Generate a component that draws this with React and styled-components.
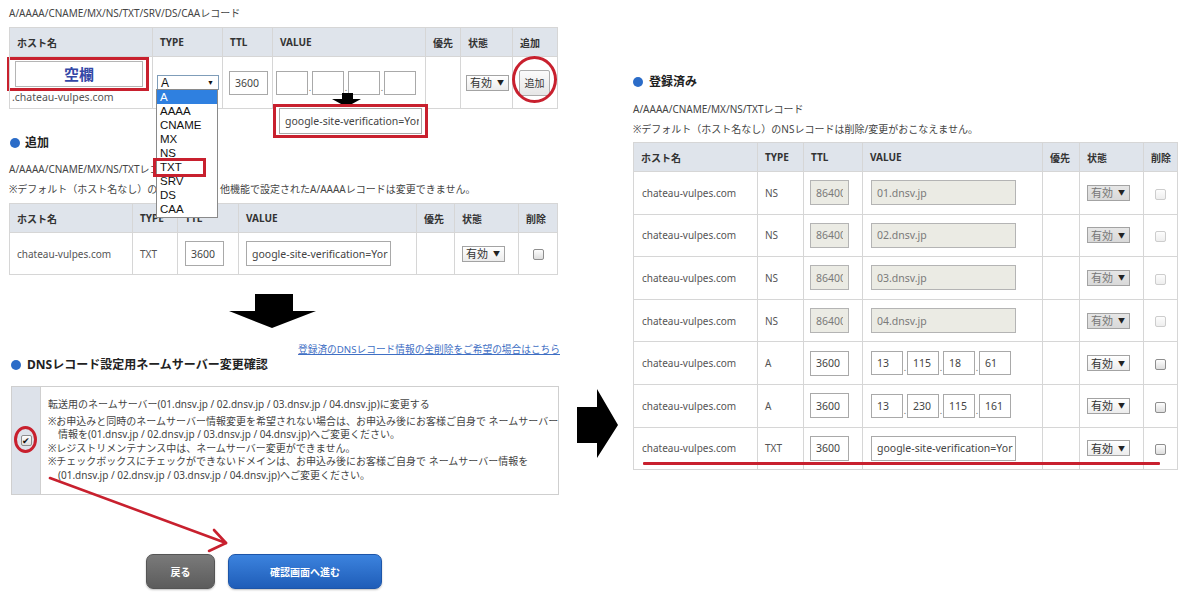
import React from "react";
import styled, { createGlobalStyle } from "styled-components";

const FONT = `"Noto Sans", "Noto Sans CJK JP", sans-serif`;
const RED = "#c8202e";

const GlobalStyle = createGlobalStyle`
  html, body { margin: 0; padding: 0; background: #fff; }
  body { font-family: ${FONT}; color: #444; }
  * { box-sizing: border-box; }
`;

const Page = styled.div`
  display: flex;
  width: 1200px;
  height: 606px;
  overflow: hidden;
  position: relative;
  background: #fff;
`;

const LeftCol = styled.div`
  position: relative;
  width: 560px;
  flex: none;
  padding: 6px 0 0 9px;
  display: flex;
  flex-direction: column;
`;

const MidCol = styled.div`
  width: 73px;
  flex: none;
  padding: 389px 0 0 16px;
`;

const RightCol = styled.div`
  position: relative;
  width: 567px;
  flex: none;
  padding-top: 73px;
  display: flex;
  flex-direction: column;
`;

const Caption = styled.div`
  margin-top: ${(p) => p.$mt || 0}px;
  font-size: 10px;
  line-height: 14px;
  height: 14px;
  color: #444;
  white-space: nowrap;
`;

const Heading = styled.h2`
  margin: ${(p) => p.$mt || 0}px 0 0;
  display: flex;
  align-items: center;
  gap: ${(p) => p.$gap || 5}px;
  height: 18px;
  font-size: 12px;
  line-height: 18px;
  font-weight: 700;
  color: #222;
  white-space: nowrap;
  &::before {
    content: "";
    flex: none;
    width: 10px;
    height: 10px;
    border-radius: 50%;
    background: #2b6cc8;
    margin-left: ${(p) => p.$dot || 0}px;
  }
`;

const Table = styled.table`
  margin-top: ${(p) => p.$mt || 0}px;
  width: ${(p) => p.$w}px;
  border-collapse: collapse;
  table-layout: fixed;
  th,
  td {
    border: 1px solid #d6d6d6;
    text-align: left;
    padding: 0 0 0 7px;
  }
  th {
    height: 29px;
    background: #dfe4eb;
    font-size: 10px;
    font-weight: 700;
    color: #333;
  }
  td {
    background: #fff;
    font-size: 10px;
    color: #555;
    vertical-align: middle;
    white-space: nowrap;
  }
`;

const Col = styled.col`
  width: ${(p) => p.$w}px;
`;

const Row = styled.tr`
  td {
    height: ${(p) => p.$h}px;
  }
`;

const Cell = styled.td`
  && {
    padding-left: ${(p) => (p.$pl === undefined ? 7 : p.$pl)}px;
  }
`;

const CenterCell = styled.td`
  && {
    padding: 0;
    text-align: center;
  }
`;

const HostCell = styled.td`
  && {
    vertical-align: top;
    padding: 0;
  }
`;

const HostBox = styled.div`
  width: 142px;
  height: 34px;
  margin-left: -3px;
  border: 3px solid ${RED};
  padding: 1px 3px 1px 5px;
`;

const HostInput = styled.div`
  height: 26px;
  border: 1px solid #b5b5b5;
  background: #fff;
  text-align: center;
  font-size: 15px;
  line-height: 24px;
  font-weight: 700;
  color: #3347a6;
`;

const Domain = styled.div`
  padding-left: 2px;
  font-size: 10.5px;
  line-height: 12px;
  color: #555;
`;

const TypeSelect = styled.div`
  display: flex;
  justify-content: space-between;
  align-items: center;
  width: 62px;
  height: 15px;
  border: 1px solid #7f9db9;
  background: #fff;
  padding: 0 4px 0 3px;
  font-family: "Liberation Sans", Arial, sans-serif;
  font-size: 12px;
  color: #111;
`;

const Caret = styled.span`
  font-size: 7px;
  color: #111;
`;

const Input = styled.input.attrs({ readOnly: true })`
  display: block;
  margin: 0;
  width: ${(p) => p.$w}px;
  height: ${(p) => p.$h || 25}px;
  border: 1px solid ${(p) => (p.$disabled ? "#b4b4b4" : "#a9a9a9")};
  background: ${(p) => (p.$disabled ? "#ebebe4" : "#fff")};
  color: ${(p) => (p.$disabled ? "#7a7a7a" : "#444")};
  font-family: ${FONT};
  font-size: 10.5px;
  padding: 0 ${(p) => p.$pr || 2}px 0 5px;
  outline: none;
`;

const IpGroup = styled.div`
  display: flex;
  align-items: flex-end;
`;

const Dot = styled.span`
  width: 4px;
  text-align: center;
  font-size: 9px;
  line-height: 9px;
  padding-bottom: 3px;
  color: #666;
`;

const Select = styled.div`
  display: flex;
  align-items: center;
  justify-content: space-between;
  width: 43px;
  height: 16px;
  border: 1px solid #a3a3a3;
  background: ${(p) =>
    p.$disabled
      ? "linear-gradient(#e6e6e6, #d9d9d9)"
      : "linear-gradient(#ffffff, #ececec)"};
  padding: 1px 4px 0 3px;
  font-size: 11px;
  line-height: 14px;
  color: ${(p) => (p.$disabled ? "#777" : "#333")};
  &::after {
    content: "▼";
    font-size: 7px;
    color: #222;
  }
`;

const AddButton = styled.div`
  width: 31px;
  height: 26px;
  border: 1px solid #adadad;
  border-radius: 2px;
  background: linear-gradient(#fbfbfb, #e6e6e6);
  font-size: 10px;
  line-height: 24px;
  text-align: center;
  color: #333;
`;

const Check = styled.span`
  display: inline-block;
  position: relative;
  vertical-align: middle;
  width: 11px;
  height: 11px;
  border: 1px solid ${(p) => (p.$disabled ? "#cdcdcd" : "#8e8e8e")};
  border-radius: 2px;
  background: ${(p) =>
    p.$disabled ? "linear-gradient(#fdfdfd, #eeeeee)" : "linear-gradient(#fdfdfd, #dedede)"};
  font-size: 9px;
  line-height: 9px;
  text-align: center;
  color: #111;
`;

const LinkRow = styled.div`
  margin-top: 16px;
  height: 12px;
  font-size: 9.7px;
  line-height: 12px;
  text-align: right;
`;

const Link = styled.a`
  font-size: 9.7px;
  line-height: 12px;
  color: #3f6fc4;
  text-decoration: underline;
  white-space: nowrap;
`;

const NoticeBox = styled.div`
  display: flex;
  margin: 12px 0 0 2px;
  width: 548px;
  height: 109px;
  border: 1px solid #cfcfcf;
`;

const NoticeSide = styled.div`
  flex: none;
  width: 29px;
  background: #dde2ea;
  border-right: 1px solid #cfcfcf;
  display: flex;
  align-items: center;
  justify-content: center;
`;

const NoticeBody = styled.div`
  padding: 11px 0 0 7px;
  font-size: 10px;
  line-height: 13.4px;
  color: #444;
  white-space: nowrap;
`;

const NoticeLead = styled.p`
  margin: 0 0 3.6px;
`;

const Note = styled.p`
  margin: 0;
  padding-left: 1em;
  text-indent: -1em;
`;

const ButtonRow = styled.div`
  display: flex;
  gap: 13px;
  margin: 59px 0 0 137px;
`;

const Btn = styled.button`
  width: ${(p) => p.$w}px;
  height: 35px;
  border: 1px solid ${(p) => (p.$primary ? "#1d55a8" : "#555")};
  border-radius: 7px;
  background: ${(p) =>
    p.$primary
      ? "linear-gradient(#3c83de, #1f5db8)"
      : "linear-gradient(#7a7a7a, #5c5c5c)"};
  color: #fff;
  font-family: ${FONT};
  font-size: 10px;
  font-weight: 700;
  box-shadow: 0 1px 2px rgba(0, 0, 0, 0.25);
`;

const BigArrow = styled.svg`
  display: block;
  margin: 19px 0 0 220px;
`;

/* overlays (annotations drawn over the page) */
const DropList = styled.ul`
  position: absolute;
  left: 156px;
  top: 89px;
  z-index: 5;
  width: 62px;
  margin: 0;
  padding: 0 0 1px;
  list-style: none;
  background: #fff;
  border: 1px solid #8a8a8a;
  font-family: "Liberation Sans", Arial, sans-serif;
  font-size: 11.5px;
`;

const DropItem = styled.li`
  height: 14px;
  line-height: 14px;
  padding-left: 3px;
  background: ${(p) => (p.$active ? "#2f80e0" : "transparent")};
  color: ${(p) => (p.$active ? "#fff" : "#111")};
`;

const RedRect = styled.div`
  position: absolute;
  z-index: 6;
  left: ${(p) => p.$x}px;
  top: ${(p) => p.$y}px;
  width: ${(p) => p.$w}px;
  height: ${(p) => p.$h}px;
  border: 3px solid ${RED};
  border-radius: ${(p) => (p.$round ? "50%" : "0")};
  background: ${(p) => (p.$fill ? "#fff" : "transparent")};
  padding: ${(p) => (p.$fill ? "1px 3px" : "0")};
`;

const Overlay = styled.svg`
  position: absolute;
  z-index: 6;
  left: ${(p) => p.$x}px;
  top: ${(p) => p.$y}px;
  overflow: visible;
`;

const Underline = styled.div`
  position: absolute;
  left: 10px;
  top: 462px;
  width: 517px;
  height: 2.5px;
  background: ${RED};
  border-radius: 1px;
`;

const TXT_VALUE = "google-site-verification=YoruKsh3xTq0";

const rightRows = [
  { type: "NS", ttl: "86400", value: "01.dnsv.jp", disabled: true },
  { type: "NS", ttl: "86400", value: "02.dnsv.jp", disabled: true },
  { type: "NS", ttl: "86400", value: "03.dnsv.jp", disabled: true },
  { type: "NS", ttl: "86400", value: "04.dnsv.jp", disabled: true },
  { type: "A", ttl: "3600", ip: ["13", "115", "18", "61"] },
  { type: "A", ttl: "3600", ip: ["13", "230", "115", "161"] },
  { type: "TXT", ttl: "3600", value: TXT_VALUE },
];

function IpInputs({ values }) {
  return (
    <IpGroup>
      {values.map((v, i) => (
        <React.Fragment key={i}>
          {i > 0 && <Dot>.</Dot>}
          <Input $w={32} $h={24} value={v} />
        </React.Fragment>
      ))}
    </IpGroup>
  );
}

export default function App() {
  return (
    <>
      <GlobalStyle />
      <Page>
        <LeftCol>
          <Caption>A/AAAA/CNAME/MX/NS/TXT/SRV/DS/CAAレコード</Caption>
          <Table $mt={7} $w={548}>
            <colgroup>
              {[143, 70, 50, 153, 35, 52, 45].map((w, i) => (
                <Col key={i} $w={w} />
              ))}
            </colgroup>
            <thead>
              <tr>
                <th>ホスト名</th>
                <th>TYPE</th>
                <th>TTL</th>
                <th>VALUE</th>
                <th>優先</th>
                <th>状態</th>
                <th>追加</th>
              </tr>
            </thead>
            <tbody>
              <Row $h={52}>
                <HostCell>
                  <HostBox>
                    <HostInput>空欄</HostInput>
                  </HostBox>
                  <Domain>.chateau-vulpes.com</Domain>
                </HostCell>
                <Cell $pl={4}>
                  <TypeSelect>
                    <span>A</span>
                    <Caret>▼</Caret>
                  </TypeSelect>
                </Cell>
                <Cell $pl={6}>
                  <Input $w={39} $h={24} value="3600" />
                </Cell>
                <Cell $pl={3}>
                  <IpInputs values={["", "", "", ""]} />
                </Cell>
                <Cell />
                <Cell $pl={5}>
                  <Select>有効</Select>
                </Cell>
                <Cell $pl={6}>
                  <AddButton>追加</AddButton>
                </Cell>
              </Row>
            </tbody>
          </Table>

          <Heading $mt={25} $dot={1} $gap={5}>
            追加
          </Heading>
          <Caption $mt={10}>A/AAAA/CNAME/MX/NS/TXTレコード</Caption>
          <Caption $mt={6}>
            ※デフォルト（ホスト名なし）のNSレコード、他機能で設定されたA/AAAAレコードは変更できません。
          </Caption>
          <Table $mt={7} $w={548}>
            <colgroup>
              {[123, 45, 61, 178, 38, 64, 39].map((w, i) => (
                <Col key={i} $w={w} />
              ))}
            </colgroup>
            <thead>
              <tr>
                <th>ホスト名</th>
                <th>TYPE</th>
                <th>TTL</th>
                <th>VALUE</th>
                <th>優先</th>
                <th>状態</th>
                <th>削除</th>
              </tr>
            </thead>
            <tbody>
              <Row $h={42}>
                <Cell>chateau-vulpes.com</Cell>
                <Cell>TXT</Cell>
                <Cell>
                  <Input $w={39} value="3600" />
                </Cell>
                <Cell>
                  <Input $w={145} value={TXT_VALUE} />
                </Cell>
                <Cell />
                <Cell>
                  <Select>有効</Select>
                </Cell>
                <CenterCell>
                  <Check />
                </CenterCell>
              </Row>
            </tbody>
          </Table>

          <BigArrow width="87" height="34" viewBox="0 0 87 34">
            <polygon points="26,0 64,0 64,17 87,17 43,34 0,17 26,17" fill="#000" />
          </BigArrow>

          <LinkRow>
            <Link>登録済のDNSレコード情報の全削除をご希望の場合はこちら</Link>
          </LinkRow>

          <Heading $dot={2} $gap={6}>
            DNSレコード設定用ネームサーバー変更確認
          </Heading>

          <NoticeBox>
            <NoticeSide>
              <Check>✔</Check>
            </NoticeSide>
            <NoticeBody>
              <NoticeLead>
                転送用のネームサーバー(01.dnsv.jp / 02.dnsv.jp / 03.dnsv.jp / 04.dnsv.jp)に変更する
              </NoticeLead>
              <Note>
                ※お申込みと同時のネームサーバー情報変更を希望されない場合は、お申込み後にお客様ご自身で ネームサーバー
                <br />
                情報を(01.dnsv.jp / 02.dnsv.jp / 03.dnsv.jp / 04.dnsv.jp)へご変更ください。
              </Note>
              <Note>※レジストリメンテナンス中は、ネームサーバー変更ができません。</Note>
              <Note>
                ※チェックボックスにチェックができないドメインは、お申込み後にお客様ご自身で ネームサーバー情報を
                <br />
                (01.dnsv.jp / 02.dnsv.jp / 03.dnsv.jp / 04.dnsv.jp)へご変更ください。
              </Note>
            </NoticeBody>
          </NoticeBox>

          <ButtonRow>
            <Btn $w={69}>戻る</Btn>
            <Btn $w={154} $primary>
              確認画面へ進む
            </Btn>
          </ButtonRow>

          {/* annotations */}
          <DropList>
            {["A", "AAAA", "CNAME", "MX", "NS", "TXT", "SRV", "DS", "CAA"].map((t, i) => (
              <DropItem key={t} $active={i === 0}>
                {t}
              </DropItem>
            ))}
          </DropList>
          <RedRect $x={153} $y={158} $w={53} $h={19} />
          <Overlay $x={332} $y={93} width="29" height="14" viewBox="0 0 29 14">
            <polygon points="10,0 21,0 21,6 29,6 14.5,14 0,6 10,6" fill="#000" />
          </Overlay>
          <RedRect $x={273} $y={104} $w={155} $h={34} $fill>
            <Input $w={143} $h={26} value={TXT_VALUE} />
          </RedRect>
          <RedRect $x={512} $y={56} $w={45} $h={47} $round />
          <RedRect $x={14} $y={426} $w={23} $h={27} $round />
          <Overlay $x={40} $y={470} width="200" height="90" viewBox="0 0 200 90">
            <g stroke={RED} strokeWidth="2.6" fill="none" strokeLinecap="round" strokeLinejoin="round">
              <line x1="10" y1="8" x2="186" y2="73" />
              <polyline points="174,60 186,73 169,81" />
            </g>
          </Overlay>
        </LeftCol>

        <MidCol>
          <svg width="43" height="70" viewBox="0 0 43 70">
            <polygon points="1,18 21,18 21,0 42,36 21,69 21,54 1,54" fill="#000" />
          </svg>
        </MidCol>

        <RightCol>
          <Heading $gap={6}>登録済み</Heading>
          <Caption $mt={11}>A/AAAA/CNAME/MX/NS/TXTレコード</Caption>
          <Caption $mt={6}>※デフォルト（ホスト名なし）のNSレコードは削除/変更がおこなえません。</Caption>
          <Table $mt={6} $w={544}>
            <colgroup>
              {[124, 46, 59, 180, 37, 64, 34].map((w, i) => (
                <Col key={i} $w={w} />
              ))}
            </colgroup>
            <thead>
              <tr>
                <th>ホスト名</th>
                <th>TYPE</th>
                <th>TTL</th>
                <th>VALUE</th>
                <th>優先</th>
                <th>状態</th>
                <th>削除</th>
              </tr>
            </thead>
            <tbody>
              {rightRows.map((r, i) => (
                <Row key={i} $h={42.6}>
                  <Cell $pl={8}>chateau-vulpes.com</Cell>
                  <Cell>{r.type}</Cell>
                  <Cell $pl={6}>
                    <Input $w={39} $pr={5} value={r.ttl} $disabled={r.disabled} />
                  </Cell>
                  <Cell $pl={8}>
                    {r.ip ? (
                      <IpInputs values={r.ip} />
                    ) : (
                      <Input $w={145} value={r.value} $disabled={r.disabled} />
                    )}
                  </Cell>
                  <Cell />
                  <Cell>
                    <Select $disabled={r.disabled}>有効</Select>
                  </Cell>
                  <CenterCell>
                    <Check $disabled={r.disabled} />
                  </CenterCell>
                </Row>
              ))}
            </tbody>
          </Table>
          <Underline />
        </RightCol>
      </Page>
    </>
  );
}
